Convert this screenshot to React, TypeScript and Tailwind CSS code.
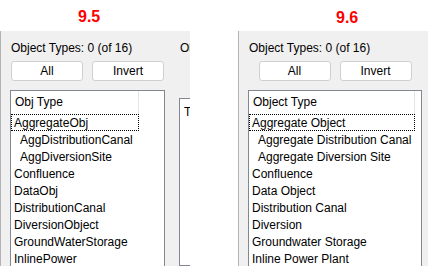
const oldItems = [
  { label: "AggregateObj", indent: false, focus: true },
  { label: "AggDistributionCanal", indent: true },
  { label: "AggDiversionSite", indent: true },
  { label: "Confluence" },
  { label: "DataObj" },
  { label: "DistributionCanal" },
  { label: "DiversionObject" },
  { label: "GroundWaterStorage" },
  { label: "InlinePower" },
];

const newItems = [
  { label: "Aggregate Object", indent: false, focus: true },
  { label: "Aggregate Distribution Canal", indent: true },
  { label: "Aggregate Diversion Site", indent: true },
  { label: "Confluence" },
  { label: "Data Object" },
  { label: "Distribution Canal" },
  { label: "Diversion" },
  { label: "Groundwater Storage" },
  { label: "Inline Power Plant" },
];

type Item = { label: string; indent?: boolean; focus?: boolean };

function TypePanel({ header, items, listW, colW }: { header: string; items: Item[]; listW: string; colW: string }) {
  return (
    <div className="flex flex-col pl-[9px] pt-[9px] shrink-0">
      <div className="pl-px h-[16px] leading-[16px] text-[12px] text-black">Object Types: 0 (of 16)</div>
      <div className={`${listW} flex justify-center gap-[9px] mt-[5px]`}>
        <button className="w-[72px] h-[20px] rounded-[3px] border border-[#d0d0d0] bg-white text-[12px] text-black leading-[18px]">
          All
        </button>
        <button className="w-[72px] h-[20px] rounded-[3px] border border-[#d0d0d0] bg-white text-[12px] text-black leading-[18px]">
          Invert
        </button>
      </div>
      <div className={`${listW} mt-[9px] h-[200px] border border-[#828790] bg-white`}>
        <div className="flex h-[23px]">
          <div className={`${colW} pl-[4px] leading-[22px] text-[12px] text-black border-r border-[#e5e5e5]`}>{header}</div>
        </div>
        {items.map((it) => (
          <div
            key={it.label}
            className={`${colW} h-[17px] leading-[16px] text-[12px] text-black whitespace-nowrap border ${
              it.focus ? "border-dotted border-black" : "border-transparent"
            } ${it.indent ? "pl-[8px]" : "pl-[2px]"}`}
          >
            {it.label}
          </div>
        ))}
      </div>
    </div>
  );
}

export default function App() {
  return (
    <div className="flex w-[428px] h-[266px] overflow-hidden bg-white font-['Liberation_Sans',Arial,sans-serif]">
      <div className="w-[190px] flex flex-col shrink-0">
        <div className="h-[31px] pl-[78px] pt-[8px] text-[16px] font-bold text-[#ff0000] leading-[18px]">9.5</div>
        <div className="flex-1 flex overflow-hidden bg-[#f0f0f0] border-l border-[#b4b4b4]">
          <TypePanel header="Obj Type" items={oldItems} listW="w-[155px]" colW="w-[128px]" />
          <div className="flex flex-col pl-[15px] pt-[9px] shrink-0">
            <div className="h-[16px] leading-[16px] text-[12px] text-black whitespace-nowrap">Object Types</div>
            <div className="mt-[42px] -ml-px w-[60px] h-[200px] border border-[#828790] bg-white pl-[4px] pt-[4px] text-[12px] text-black">
              Type
            </div>
          </div>
        </div>
      </div>
      <div className="w-[48px] shrink-0" />
      <div className="w-[190px] flex flex-col shrink-0">
        <div className="h-[31px] pl-[98px] pt-[9px] text-[16px] font-bold text-[#ff0000] leading-[18px]">9.6</div>
        <div className="flex-1 flex overflow-hidden bg-[#f0f0f0] border-l border-[#b4b4b4]">
          <TypePanel header="Object Type" items={newItems} listW="w-[174px]" colW="w-[166px]" />
        </div>
      </div>
    </div>
  );
}
